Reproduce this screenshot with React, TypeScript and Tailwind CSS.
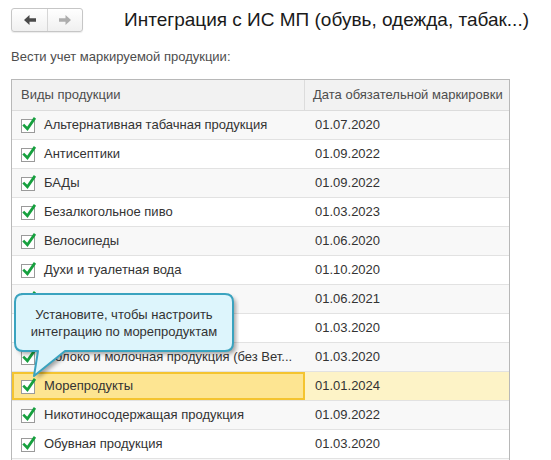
import React from "react";

const rows: { name: string; date: string }[] = [
  { name: "Альтернативная табачная продукция", date: "01.07.2020" },
  { name: "Антисептики", date: "01.09.2022" },
  { name: "БАДы", date: "01.09.2022" },
  { name: "Безалкогольное пиво", date: "01.03.2023" },
  { name: "Велосипеды", date: "01.06.2020" },
  { name: "Духи и туалетная вода", date: "01.10.2020" },
  { name: "Медицинские изделия", date: "01.06.2021" },
  { name: "Минеральная вода", date: "01.03.2020" },
  { name: "Молоко и молочная продукция (без Вет...", date: "01.03.2020" },
  { name: "Морепродукты", date: "01.01.2024" },
  { name: "Никотиносодержащая продукция", date: "01.09.2022" },
  { name: "Обувная продукция", date: "01.03.2020" },
];

function Check() {
  return (
    <svg width="18" height="18" viewBox="0 0 18 18" className="shrink-0">
      <rect x="1.5" y="3.5" width="13" height="13" fill="#ffffff" stroke="#9a9a9a" strokeWidth="1" />
      <path d="M4.2 9.6 L7.4 12.8 L14.2 3" fill="none" stroke="#16a03e" strokeWidth="2.7" strokeLinecap="square" />
    </svg>
  );
}

function Arrow({ color, flip }: { color: string; flip?: boolean }) {
  return (
    <svg width="14" height="12" viewBox="0 0 14 12" style={flip ? { transform: "scaleX(-1)" } : undefined}>
      <path d="M1 6 L6.5 1 V4.3 H13 V7.7 H6.5 V11 Z" fill={color} />
    </svg>
  );
}

const calloutPath =
  "M10 2 H212 Q220 2 220 10 V51 Q220 59 212 59 H52 L21 84 L25 59 H10 Q2 59 2 51 V10 Q2 2 10 2 Z";

export default function App() {
  return (
    <div className="relative w-[551px] h-[460px] overflow-hidden bg-white font-['Liberation_Sans',Arial,sans-serif] text-[#333]">
      <div className="flex items-center pl-[11px] pt-[8px]">
        <div className="flex h-[24px] w-[72px] rounded-[3px] border border-[#c6c6c6] bg-gradient-to-b from-white to-[#f0f0f0] shadow-[0_1px_1px_rgba(0,0,0,0.08)]">
          <div className="flex w-[36px] items-center justify-center border-r border-[#d6d6d6]">
            <Arrow color="#4a4a4a" />
          </div>
          <div className="flex flex-1 items-center justify-center">
            <Arrow color="#adadad" flip />
          </div>
        </div>
        <div className="ml-[41px] text-[19px] leading-[24px] text-[#1a1a1a] whitespace-nowrap">
          Интеграция с ИС МП (обувь, одежда, табак...)
        </div>
      </div>

      <div className="mt-[17px] pl-[11px] text-[13px] leading-[16px] text-[#4d4d4d]">
        Вести учет маркируемой продукции:
      </div>

      <div className="ml-[11px] mt-[14px] w-[499px] border-x border-t border-[#b8b8b8]">
        <div className="flex h-[31px] border-b border-[#dcdcdc] bg-[#f2f2f2] text-[13px] text-[#4d4d4d]">
          <div className="flex w-[293px] items-center border-r border-[#dcdcdc] pl-[9px]">Виды продукции</div>
          <div className="flex flex-1 items-center pl-[8px]">Дата обязательной маркировки</div>
        </div>
        {rows.map((r, i) => {
          const selected = r.name === "Морепродукты";
          const odd = i % 2 === 0;
          return (
            <div
              key={r.name}
              className={
                "flex h-[29px] border-b border-[#e2e2e2] text-[13px] " +
                (selected ? "bg-[#fdf3c7]" : odd ? "bg-[#f8f8f8]" : "bg-white")
              }
            >
              <div
                className={
                  "flex w-[293px] items-center gap-[6px] whitespace-nowrap overflow-hidden " +
                  (selected ? "bg-[#fde592] border-2 border-[#f4c430] pl-[6px]" : "pl-[8px]")
                }
              >
                <Check />
                <span>{r.name}</span>
              </div>
              <div className="flex flex-1 items-center pl-[10px]">{r.date}</div>
            </div>
          );
        })}
        <div className="h-[29px] bg-[#f8f8f8]" />
      </div>

      {/* Callout */}
      <div className="absolute left-[13px] top-[292px] w-[226px] h-[90px]">
        <svg width="226" height="90" viewBox="0 0 226 90" className="absolute left-0 top-0">
          <defs>
            <filter id="sh" x="-10%" y="-10%" width="130%" height="140%">
              <feGaussianBlur stdDeviation="2" />
            </filter>
          </defs>
          <path d={calloutPath} fill="rgba(0,0,0,0.35)" transform="translate(3,3)" filter="url(#sh)" />
          <path d={calloutPath} fill="#ddf5fc" stroke="#3aa3bf" strokeWidth="2" strokeLinejoin="round" />
        </svg>
        <div className="absolute left-[2px] top-[14px] w-[218px] text-center text-[13px] leading-[17px] text-[#333]">
          Установите, чтобы настроить
          <br />
          интеграцию по морепродуктам
        </div>
      </div>
    </div>
  );
}
